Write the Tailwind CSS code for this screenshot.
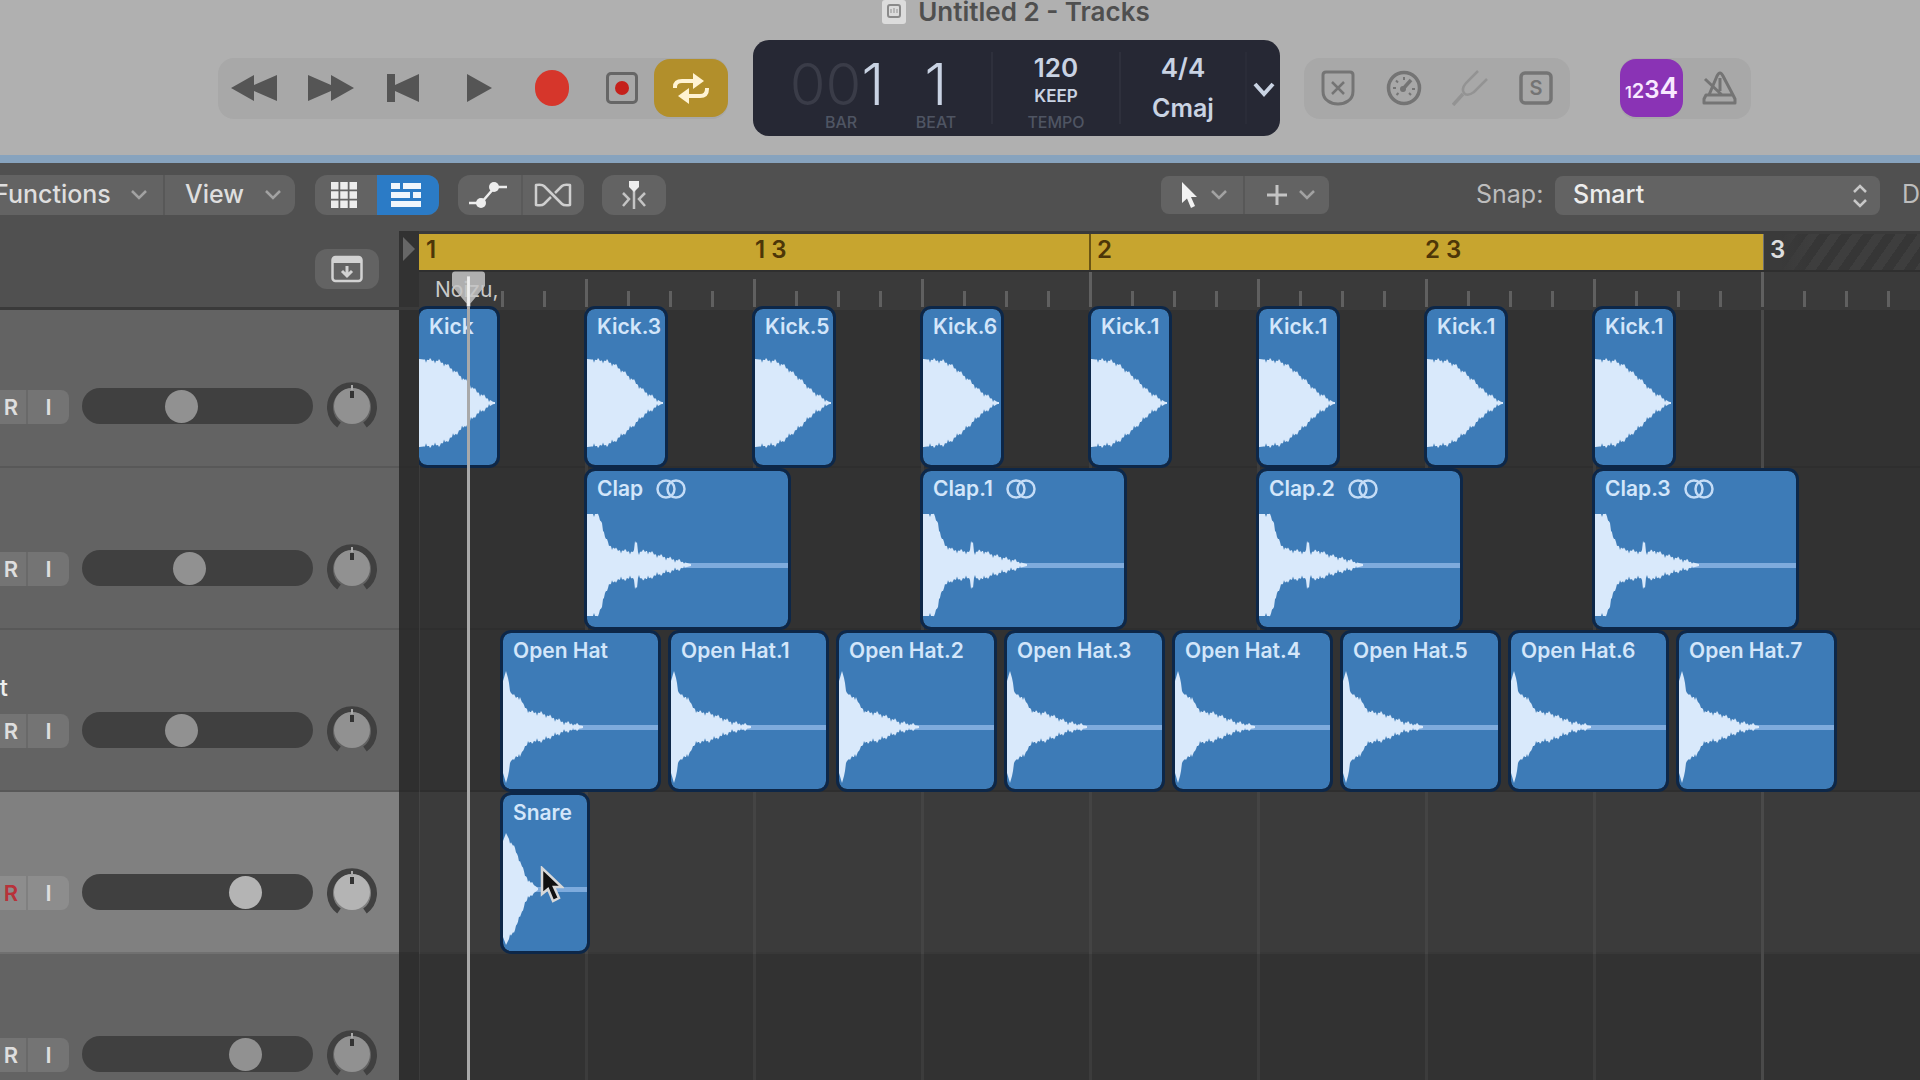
<!DOCTYPE html>
<html lang="en">
<head>
<meta charset="utf-8">
<meta name="viewport" content="width=device-width, initial-scale=1">
<title>Untitled 2 - Tracks</title>
<script src="https://cdn.jsdelivr.net/npm/@tailwindcss/browser@4"></script>
</head>
<body class="flex h-screen flex-col overflow-hidden bg-[#323232] font-['Inter',sans-serif] text-[#dedede]">

<!-- Title bar and transport -->
<header class="flex h-[163px] shrink-0 flex-col border-b-8 border-[#87a3be] bg-[#b0b0b0]">
  <h1 class="flex h-6 items-center justify-center gap-3 pl-28 text-[26px] leading-6 font-semibold text-[#4f4f4f]">
    <svg class="h-6 w-6" viewBox="0 0 24 24" aria-hidden="true"><rect width="24" height="24" rx="3" fill="#dcdcdc"/><rect x="6" y="5" width="12" height="12" rx="2" fill="none" stroke="#8a8a8a" stroke-width="2"/><path d="M9 9v4M12 8v5M15 9v4" stroke="#aaa" stroke-width="1.5"/></svg>
    Untitled 2 - Tracks
  </h1>
  <div class="flex items-center pt-4 pl-[218px]">
    <div class="flex h-[61px] w-[510px] items-center rounded-2xl bg-[#a8a8a8]">
      <button aria-label="Rewind" class="flex w-[72px] justify-center"><svg class="h-7 w-12" viewBox="0 0 48 28"><path d="M1 14 24 1v10L47 1v26L24 17v10z" fill="#555"/></svg></button>
      <button aria-label="Forward" class="flex w-[82px] justify-center"><svg class="h-7 w-12" viewBox="0 0 48 28"><path d="M47 14 24 1v10L1 1v26l23-10v10z" fill="#555"/></svg></button>
      <button aria-label="Go to beginning" class="flex w-[62px] justify-center"><svg class="h-7 w-8" viewBox="0 0 32 28"><path d="M0 0h8v11L32 0v28L8 17v11H0z" fill="#555"/></svg></button>
      <button aria-label="Play" class="flex w-[90px] justify-center"><svg class="h-7 w-7" viewBox="0 0 28 28"><path d="M2 0 27 14 2 28z" fill="#555"/></svg></button>
      <button aria-label="Record" class="flex w-[56px] justify-center"><span class="h-9 w-[34px] rounded-full bg-[#d6362b]"></span></button>
      <button aria-label="Capture recording" class="flex w-[74px] justify-center pl-2.5"><svg class="h-8 w-8" viewBox="0 0 32 32"><rect x="1.5" y="1.500" width="29" height="29" rx="3.500" fill="none" stroke="#666" stroke-width="3"/><circle cx="16" cy="16" r="7" fill="#c5201a"/></svg></button>
      <button aria-label="Cycle" class="flex h-[58px] w-[74px] items-center justify-center rounded-2xl bg-[#b28f2b]"><svg class="h-8 w-10" viewBox="0 0 40 32" fill="none" stroke="#fff3d2" stroke-width="4"><path d="M4 16v-1q0-6 7-6h12M36 16v1q0 7-7 7H16"/><path d="M22 1l11 8-11 8zM18 16L7 24l11 8z" fill="#fff3d2" stroke="none"/></svg></button>
    </div>

    <section aria-label="Display" class="ml-[25px] flex h-24 w-[527px] rounded-2xl bg-[#262834] py-3 text-center text-[#c9d3e3]">
      <div class="w-[140px] pt-1 pl-7">
        <p class="text-[58px] leading-14 font-light"><span class="text-[#3a3c48]">00</span>1</p>
        <p class="pl-2 text-base leading-5 font-medium text-[#4f5563]">BAR</p>
      </div>
      <div class="w-[100px] border-r-2 border-[#2e303c] pt-1">
        <p class="pr-3 text-[58px] leading-14 font-light">1</p>
        <p class="pr-3 text-base leading-5 font-medium text-[#4f5563]">BEAT</p>
      </div>
      <div class="w-[128px] border-r-2 border-[#2e303c]">
        <p class="text-[26px] leading-8 font-semibold">120</p>
        <p class="text-[17px] leading-6 font-semibold">KEEP</p>
        <p class="text-base leading-7 font-medium text-[#4f5563]">TEMPO</p>
      </div>
      <div class="w-[126px] border-r-2 border-[#2a2c38]">
        <p class="text-[26px] leading-8 font-semibold">4/4</p>
        <p class="text-[25px] leading-12 font-semibold">Cmaj</p>
      </div>
      <button aria-label="Display mode" class="flex flex-1 items-center justify-center"><svg class="mt-1 h-4 w-6" viewBox="0 0 24 16"><path d="M3 2l9 10 9-10" fill="none" stroke="#c9d3e3" stroke-width="4"/></svg></button>
    </section>

    <div class="ml-6 flex h-[61px] w-[266px] items-center justify-between rounded-2xl bg-[#a8a8a8] px-4 text-[#747474]">
      <button aria-label="Replace"><svg class="h-9 w-9" viewBox="0 0 36 36" fill="none" stroke="currentColor" stroke-width="3"><path d="M6 2h24q3 0 3 3v16q0 7-5 10-4 3-10 3T8 31q-5-3-5-10V5q0-3 3-3z"/><path d="M12 12l12 12M24 12L12 24" stroke-width="2.500"/></svg></button>
      <button aria-label="Low latency"><svg class="h-9 w-9" viewBox="0 0 36 36" fill="none" stroke="currentColor"><circle cx="18" cy="18" r="15.500" stroke-width="3.500"/><path d="M7 18h3M26 19h3M18 7v3M10 10.500l2 2M10.500 25l2-2M25 25l-2-2" stroke-width="2"/><path d="M16 20l9-10" stroke-width="3.500"/><circle cx="17" cy="19" r="3" fill="currentColor" stroke="none"/></svg></button>
      <button aria-label="Tuner"><svg class="h-9 w-9 text-[#939393]" viewBox="0 0 36 36" fill="none" stroke="currentColor" stroke-width="2.500"><path d="M1 35l10-11" stroke-width="3.500"/><path d="M26 1L14 13q-5 6-2 10t10-1L35 9"/></svg></button>
      <button aria-label="Solo"><svg class="h-9 w-9" viewBox="0 0 36 36"><rect x="3" y="3" width="30" height="30" rx="4" fill="none" stroke="currentColor" stroke-width="3.500"/><text x="18" y="25" text-anchor="middle" font-size="20" font-weight="600" fill="currentColor">S</text></svg></button>
    </div>

    <div class="ml-[50px] flex h-[61px] w-[131px] items-center rounded-2xl bg-[#a8a8a8]">
      <button aria-label="Count in" class="flex h-[58px] w-[63px] items-baseline justify-center rounded-2xl bg-[#8a33b5] pt-2 font-semibold text-[#f8e8ff]"><span class="text-base">1</span><span class="text-xl">2</span><span class="text-2xl">3</span><span class="text-[28px]">4</span></button>
      <button aria-label="Metronome" class="flex flex-1 justify-center pl-1 text-[#747474]"><svg class="h-9 w-9" viewBox="0 0 36 36" fill="none" stroke="currentColor" stroke-width="3" stroke-linejoin="round"><path d="M3 29v4h31v-4l-2-4H5zM8 25L16 6q3-6 6 0l10 19M4 9l17 16M19 8v13"/></svg></button>
    </div>
  </div>
</header>

<!-- Tracks toolbar -->
<nav class="flex h-[68px] shrink-0 items-center bg-[#505050] pt-3 pb-4 text-[25px] font-medium">
  <div class="flex h-10 w-[295px] rounded-r-xl bg-[#636363]">
    <button class="flex w-[165px] items-center justify-between border-r-2 border-[#585858] pr-4"><span class="-ml-1.5">Functions</span>
      <svg class="h-3 w-4" viewBox="0 0 16 12"><path d="M1 2l7 7 7-7" fill="none" stroke="#a2a2a2" stroke-width="2.500"/></svg></button>
    <button class="flex flex-1 items-center justify-between pr-3.5 pl-5">View
      <svg class="h-3 w-4" viewBox="0 0 16 12"><path d="M1 2l7 7 7-7" fill="none" stroke="#a2a2a2" stroke-width="2.500"/></svg></button>
  </div>
  <div class="ml-5 flex h-10 w-[124px] overflow-hidden rounded-xl bg-[#636363]">
    <button aria-label="Grid view" class="flex flex-1 items-center justify-center pr-1"><svg class="h-[26px] w-[26px]" viewBox="0 0 26 26" fill="#ededed"><path d="M0 0h7.500v7.500H0zM9.250 0h7.500v7.500h-7.500zM18.500 0H26v7.500h-7.500zM0 9.250h7.500v7.500H0zM9.250 9.250h7.500v7.500h-7.500zM18.500 9.250H26v7.500h-7.500zM0 18.500h7.500V26H0zM9.250 18.500h7.500V26h-7.500zM18.500 18.500H26V26h-7.500z"/></svg></button>
    <button aria-label="Tracks view" class="flex flex-1 items-center justify-center bg-[#2b7bc6] pr-1"><svg class="h-6 w-[30px]" viewBox="0 0 30 24" fill="#f0f6fc"><path d="M0 0h9v6H0zM12 0h18v6H12zM0 9h19v6H0zM22 9h8v6h-8zM0 18h30v6H0z"/></svg></button>
  </div>
  <div class="ml-[19px] flex h-10 w-[126px] rounded-xl bg-[#636363]">
    <button aria-label="Automation" class="flex flex-1 items-center justify-center border-r-2 border-[#5a5a5a] pr-1"><svg class="h-7 w-[38px]" viewBox="0 0 38 28" fill="none" stroke="#ededed" stroke-width="2.500"><path d="M0 22h12L26 6h12"/><circle cx="12" cy="22" r="5" fill="#ededed" stroke="none"/><circle cx="25" cy="6" r="5" fill="#ededed" stroke="none"/></svg></button>
    <button aria-label="Flex" class="flex flex-1 items-center justify-center pr-0.5"><svg class="h-6 w-[38px]" viewBox="0 0 38 24" fill="none" stroke="#cfcfcf" stroke-width="2.500" stroke-linejoin="round"><path d="M21 10l7-7q2-2 8-1v20q-6 1-8-1L10 3Q8 1 2 2v20q6 1 8-1l7-7"/></svg></button>
  </div>
  <button aria-label="Catch playhead" class="ml-[18px] flex h-10 w-16 items-center justify-center rounded-xl bg-[#636363]"><svg class="h-7 w-7" viewBox="0 0 28 28" fill="none" stroke="#c4c4c4" stroke-width="2.500"><path d="M14 8v20M3 12l6 6-6 7M25 12l-6 6 6 7"/><path d="M9 0h10v6l-5 5-5-5z" fill="#ededed" stroke="none"/></svg></button>

  <div class="ml-auto flex h-[38px] w-[168px] shrink-0 rounded-lg bg-[#636363]">
    <button aria-label="Pointer tool" class="flex w-[84px] items-center justify-center gap-3.5 border-r-2 border-[#585858] pl-1">
      <svg class="h-7 w-4" viewBox="0 0 16 28"><path d="M1 1v21l5-4.500 4 9.500 4-2-4-9h6z" fill="#f2f2f2"/></svg>
      <svg class="h-3 w-4" viewBox="0 0 16 12"><path d="M1 2l7 7 7-7" fill="none" stroke="#a2a2a2" stroke-width="2.500"/></svg></button>
    <button aria-label="Secondary tool" class="flex flex-1 items-center justify-center gap-3 pl-2">
      <svg class="h-5 w-5" viewBox="0 0 20 20"><path d="M10 0v20M0 10h20" stroke="#c4c4c4" stroke-width="3"/></svg>
      <svg class="h-3 w-4" viewBox="0 0 16 12"><path d="M1 2l7 7 7-7" fill="none" stroke="#a2a2a2" stroke-width="2.500"/></svg></button>
  </div>
  <label for="snap" class="ml-[147px] w-[69px] shrink-0 font-normal whitespace-nowrap text-[#bdbdbd]">Snap:</label>
  <div class="relative mr-[22px] ml-2.5 h-[39px] w-[325px] shrink-0">
    <select id="snap" class="h-full w-full appearance-none rounded-lg bg-[#636363] pl-[18px] text-[#ededed]"><option>Smart</option></select>
    <svg class="pointer-events-none absolute top-2 right-3 h-6 w-4" viewBox="0 0 16 24"><path d="M2 8l6-6 6 6M2 16l6 6 6-6" fill="none" stroke="#c8c8c8" stroke-width="2.500"/></svg>
  </div>
  <span class="w-[18px] shrink-0 overflow-hidden font-normal text-[#bdbdbd]">Drag:</span>
</nav>

<main class="relative flex flex-1 flex-col">
  <!-- Ruler row -->
  <div class="flex h-[79px] shrink-0 border-b-[3px] border-[#3a3a3a] bg-[#505050]">
    <div class="flex w-[399px] shrink-0 justify-end pt-[18px] pr-5">
      <button aria-label="Track header options" class="flex h-10 w-16 items-center justify-center rounded-xl bg-[#636363]"><svg class="h-7 w-8" viewBox="0 0 32 28" fill="none" stroke="#d2d2d2" stroke-width="2.500"><rect x="1.500" y="2" width="29" height="24" rx="3"/><path d="M2 5h28" stroke-width="6"/><path d="M16 11v9M11 16l5 5 5-5" stroke-width="3"/></svg></button>
    </div>
    <div class="w-5 shrink-0 bg-[#323232] pt-1.5 pl-1"><svg class="h-6 w-3" viewBox="0 0 12 24"><path d="M0 0l12 12L0 24z" fill="#666"/></svg></div>
    <div class="flex flex-1 flex-col overflow-hidden bg-[#3a3a3a]">
      <div class="flex h-[39px] pt-[3px] text-2xl leading-8 font-semibold text-[#4d3608]">
        <div class="w-[334px] shrink-0 bg-[#c7a52f] pl-[7px]">1</div>
        <div class="w-[336px] shrink-0 bg-[#c7a52f] pl-0.5">1 3</div>
        <div class="w-[334px] shrink-0 border-l-2 border-[#6b5514] bg-[#c7a52f] pl-1.5">2</div>
        <div class="w-[340px] shrink-0 bg-[#c7a52f] pl-0.5">2 3</div>
        <div class="flex-1 border-l border-[#707070] bg-[linear-gradient(90deg,#3a3a3a_16px,transparent_48px),repeating-linear-gradient(125deg,#3e3e3e_0_9px,#363636_9px_18px)] pl-1.5 text-[#dedede]">3</div>
      </div>
      <div class="relative flex-1 overflow-hidden border-t-2 border-[#2f2f2f]" id="ticks">
        <span class="absolute top-1 left-4 text-[21px] leading-7 text-[#c9c9c9]">Noizu,</span>
      </div>
    </div>
  </div>
  <div id="tracks"></div>

  <!-- Playhead -->
  <div class="absolute top-10 bottom-0 left-[452px] flex w-[33px] flex-col items-center">
    <svg class="h-9 w-[33px] shrink-0" viewBox="0 0 34 36"><path d="M3 0h28q3 0 3 3v12L19 33v3h-4v-3L0 15V3q0-3 3-3z" fill="#c4c4c4" fill-opacity=".85"/><path d="M17 5v31" stroke="#eee" stroke-width="3"/></svg>
    <div class="w-[3px] flex-1 bg-[#a9a9a9]"></div>
  </div>
  <!-- Mouse pointer -->
  <svg class="absolute top-[635px] left-[540px] h-[38px] w-6" viewBox="0 0 24 38"><path d="M2 2v26l6-5 5 12 6-3-5-11h8z" fill="#111" stroke="#d8d8d8" stroke-width="2.500"/></svg>
</main>

<script>
const BEAT = 168;
// Upper half of each sample's envelope: [x, y] pairs, mirrored about y = 94.
const samples = {
  kick: { w: 78, env: [[0,50],[20,52],[28,56],[38,64],[47,72],[57,82],[66,88],[76,94]] },
  clap: { w: 201, env: [[0,43],[10,43],[15,52],[18,66],[22,74],[30,79],[47,81],[48,71],[50,71],[51,81],[60,80],[70,84],[85,88],[104,93]] },
  hat: { w: 155, env: [[0,48],[3,38],[5,45],[8,60],[12,64],[17,64],[20,72],[27,79],[38,80],[48,84],[60,89],[80,93]] },
  snare: { w: 84, env: [[0,46],[3,38],[6,44],[12,54],[17,66],[22,80],[28,88],[35,93]] },
};
const tracks = [
  { vol: 42, sample: 'kick', clips: ['Kick','Kick.3','Kick.5','Kick.6','Kick.1','Kick.1','Kick.1','Kick.1'].map((n, i) => [n, i]) },
  { vol: 46, sample: 'clap', clips: ['Clap','Clap.1','Clap.2','Clap.3'].map((n, i) => [n, 1 + 2 * i]) },
  { vol: 42, sample: 'hat', name: 'Open Hat', clips: Array.from({ length: 8 }, (_, i) => [i ? 'Open Hat.' + i : 'Open Hat', i + 0.5]) },
  { vol: 74, sample: 'snare', selected: true, clips: [['Snare', 0.5]] },
  { vol: 74, sample: 'kick', clips: [] },
];
function wave({ env }) {
  const top = [];
  const last = env[env.length - 1][0];
  for (let x = 0; x <= last; x++) {
    let k = 0;
    while (k < env.length - 2 && env[k + 1][0] <= x) k++;
    const [x0, y0] = env[k], [x1, y1] = env[k + 1];
    const y = y0 + (y1 - y0) * Math.min(1, (x - x0) / (x1 - x0));
    const tooth = x > 4 && x < last - 4 ? [0, 0, -2, -1, 1, 0, 0, 3, 0][x % 9] : 0;
    top.push([x, Math.min(93, y + tooth)]);
  }
  const low = top.map(([x, y]) => [x, 188 - y]).reverse();
  return 'M' + [...top, [last, 94], ...low].map(p => p.join(' ')).join('L') + 'z';
}
function clip(t, [name, beat]) {
  const s = samples[t.sample];
  const rings = t.sample === 'clap' ? '<svg class="h-5 w-8" viewBox="0 0 32 20" fill="none" stroke="#c4dcf6" stroke-width="2.500"><circle cx="11" cy="10" r="8.500"/><circle cx="21" cy="10" r="8.500"/></svg>' : '';
  const line = t.sample === 'kick' ? '' : `<rect x="0" y="92" width="${s.w}" height="5" fill="#7eabdd"/>`;
  return `<div class="absolute bottom-[3px] h-[156px] overflow-hidden rounded-lg bg-[#3d7bb7] outline-3 outline-[#0d2748]" style="left:${beat * BEAT}px;width:${s.w}px">
    <svg class="absolute inset-0 h-full w-full" viewBox="0 0 ${s.w} 156" aria-hidden="true">${line}<path d="${wave(s)}" fill="#d9e9fb"/></svg>
    <p class="relative flex items-center gap-3 pt-1 pl-2.5 text-[21px] leading-7 font-semibold whitespace-nowrap text-[#d3e6fa]">${name}${rings}</p></div>`;
}
document.getElementById('tracks').innerHTML = tracks.map((t, i) => {
  const sel = t.selected;
  return `<section class="flex ${i ? 'h-[162px]' : 'h-[158px]'}">
    <div class="relative flex w-[399px] shrink-0 items-end overflow-hidden border-b-2 ${sel ? 'border-[#707070] bg-[#808080]' : 'border-[#585858] bg-[#636363]'} pb-[42px]">
      ${t.name ? `<span class="absolute top-[42px] right-[391px] text-2xl font-medium whitespace-nowrap text-[#ededed]">${t.name}</span>` : ''}
      <button aria-label="Record enable" class="h-[34px] w-7 border-r-2 ${sel ? 'border-[#808080] bg-[#8d8d8d] text-[#b8323a]' : 'border-[#696969] bg-[#747474]'} pr-2 text-right text-[22px] font-semibold">R</button>
      <button aria-label="Input monitoring" class="h-[34px] w-[41px] rounded-r-lg ${sel ? 'bg-[#8d8d8d]' : 'bg-[#747474]'} text-[22px] font-semibold">I</button>
      <input type="range" aria-label="Volume" value="${t.vol}" class="ml-[13px] h-9 w-[231px] appearance-none rounded-full bg-[#404040] [&::-webkit-slider-thumb]:h-[33px] [&::-webkit-slider-thumb]:w-[33px] [&::-webkit-slider-thumb]:appearance-none [&::-webkit-slider-thumb]:rounded-full ${sel ? '[&::-webkit-slider-thumb]:bg-[#b4b4b4]' : '[&::-webkit-slider-thumb]:bg-[#919191]'}">
      <svg class="-mb-2 ml-[13px] h-[52px] w-[52px]" viewBox="0 0 52 52" role="img" aria-label="Pan"><path d="M13 45A22 22 0 1 1 39 45" fill="none" stroke="#404040" stroke-width="6"/><circle cx="26" cy="26" r="18" fill="${sel ? '#b4b4b4' : '#919191'}"/><path d="M26 5v5" stroke="#aaa" stroke-width="2"/><path d="M26 11v7" stroke="#333" stroke-width="4"/></svg>
    </div>
    <div class="w-5 shrink-0 border-b-2 ${sel ? 'border-[#303030] bg-[#363636]' : 'border-[#2d2d2d] bg-[#2f2f2f]'}"></div>
    <div class="relative flex-1 ${sel ? 'bg-[#3b3b3b]' : 'bg-[#323232]'} overflow-x-clip">
      <div class="absolute inset-0 border-b-2 ${sel ? 'border-[#383838]' : 'border-[#2e2e2e]'}"></div>
      ${Array.from({ length: 9 }, (_, b) => `<div class="absolute inset-y-0 w-[3px] ${b === 8 ? 'bg-[#4a4a4a]' : sel ? 'bg-[#444444]' : 'bg-[#3c3c3c]'}" style="left:${b * BEAT - 2}px"></div>`).join('')}
      ${t.clips.map(c => clip(t, c)).join('')}
    </div>
  </section>`;
}).join('');
document.getElementById('ticks').insertAdjacentHTML('beforeend', Array.from({ length: 36 }, (_, i) =>
  i < 2 ? '' : `<div class="absolute bottom-0 w-[3px] bg-[#606060] ${i === 32 || i === 16 ? 'h-full' : i % 4 ? 'h-4' : 'h-7'}" style="left:${i * 42 - 2}px"></div>`).join(''));
</script>
</body>
</html>
